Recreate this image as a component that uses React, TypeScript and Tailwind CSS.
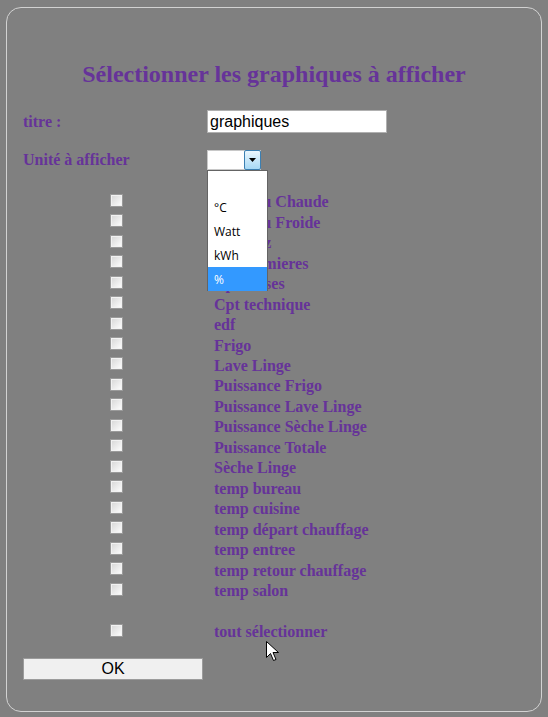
import React from 'react';

const SERIES = [
  'Cpt Eau Chaude',
  'Cpt Eau Froide',
  'Cpt Gaz',
  'Cpt Lumieres',
  'Cpt Prises',
  'Cpt technique',
  'edf',
  'Frigo',
  'Lave Linge',
  'Puissance Frigo',
  'Puissance Lave Linge',
  'Puissance Sèche Linge',
  'Puissance Totale',
  'Sèche Linge',
  'temp bureau',
  'temp cuisine',
  'temp départ chauffage',
  'temp entree',
  'temp retour chauffage',
  'temp salon',
];

const UNITS = ['', '°C', 'Watt', 'kWh', '%'];

function Checkbox() {
  return (
    <div className="w-[13px] h-[13px] shrink-0 border border-[#9a9a9a] bg-gradient-to-br from-[#d6d6d6] to-[#ffffff] shadow-[inset_0_0_0_1px_#f2f2f2]" />
  );
}

function Row({ label }: { label?: string }) {
  return (
    <div className="flex items-center h-[20.47px] pl-[103px]">
      {label !== undefined && <Checkbox />}
      {label !== undefined && (
        <span className="ml-[91px] text-[16px] leading-[18px] font-bold text-[#663399] whitespace-nowrap translate-y-[2px]">
          {label}
        </span>
      )}
    </div>
  );
}

export default function App() {
  return (
    <div className="min-h-[717px] bg-[#808080] pt-[7px] px-[6px] pb-[5px] font-['Liberation_Serif',serif]">
      <div className="relative h-[705px] border border-[#d2d2d2] rounded-[15px]">
        {/* Heading */}
        <h1 className="mt-[52px] text-center text-[24px] leading-[28px] font-bold text-[#663399]">
          Sélectionner les graphiques à afficher
        </h1>

        {/* titre */}
        <div className="mt-[22px] flex items-center h-[23px] pl-[16px]">
          <span className="w-[184px] text-[16px] font-bold text-[#663399]">titre :</span>
          <div className="w-[180px] h-[23px] border border-[#b0b0b0] bg-white flex items-center pl-[2px] font-['Liberation_Sans',sans-serif] text-[16px] text-black">
            graphiques
          </div>
        </div>

        {/* Unité */}
        <div className="mt-[17px] flex items-center h-[20px] pl-[16px]">
          <span className="w-[184px] text-[16px] font-bold text-[#663399]">Unité à afficher</span>
          <div className="relative z-10">
            <div className="flex w-[54px] h-[20px] bg-white border border-[#c8c8c8]">
              <div className="flex-1" />
              <div className="w-[17px] -my-px -mr-px border border-[#3c7fb1] rounded-[2px] bg-gradient-to-b from-[#eaf6fd] to-[#a7d9f5] flex items-center justify-center">
                <svg width="7" height="4" viewBox="0 0 7 4">
                  <path d="M0 0h7L3.5 4z" fill="#000" />
                </svg>
              </div>
            </div>
            <div className="absolute left-0 top-full w-[61px] h-[121px] bg-white border border-[#646464] font-['Open_Sans',sans-serif] text-[12px] text-black">
              {UNITS.map((u, i) => (
                <div
                  key={i}
                  className={`h-[24px] flex items-center pl-[6px] pt-[2px] ${i === UNITS.length - 1 ? 'bg-[#3399ff] text-white' : ''}`}
                >
                  {u}
                </div>
              ))}
            </div>
          </div>
        </div>

        {/* Series list */}
        <div className="mt-[20px]">
          {SERIES.map((s) => (
            <Row key={s} label={s} />
          ))}
          <Row />
          <Row label="tout sélectionner" />
        </div>

        {/* OK */}
        <div className="mt-[17px] pl-[16px]">
          <button className="w-[180px] h-[22px] bg-[#f0f0f0] border border-[#9c9c9c] font-['Liberation_Sans',sans-serif] text-[16px] leading-[20px] text-black">
            OK
          </button>
        </div>

        {/* Mouse pointer */}
        <svg
          className="absolute left-[259px] top-[633px]"
          width="13"
          height="21"
          viewBox="0 0 13 21"
        >
          <path
            d="M0.5 0.5v16l4-4 3 7 2.5-1-3-7h5.5z"
            fill="#fff"
            stroke="#000"
            strokeWidth="1"
            strokeLinejoin="round"
          />
        </svg>
      </div>
    </div>
  );
}
